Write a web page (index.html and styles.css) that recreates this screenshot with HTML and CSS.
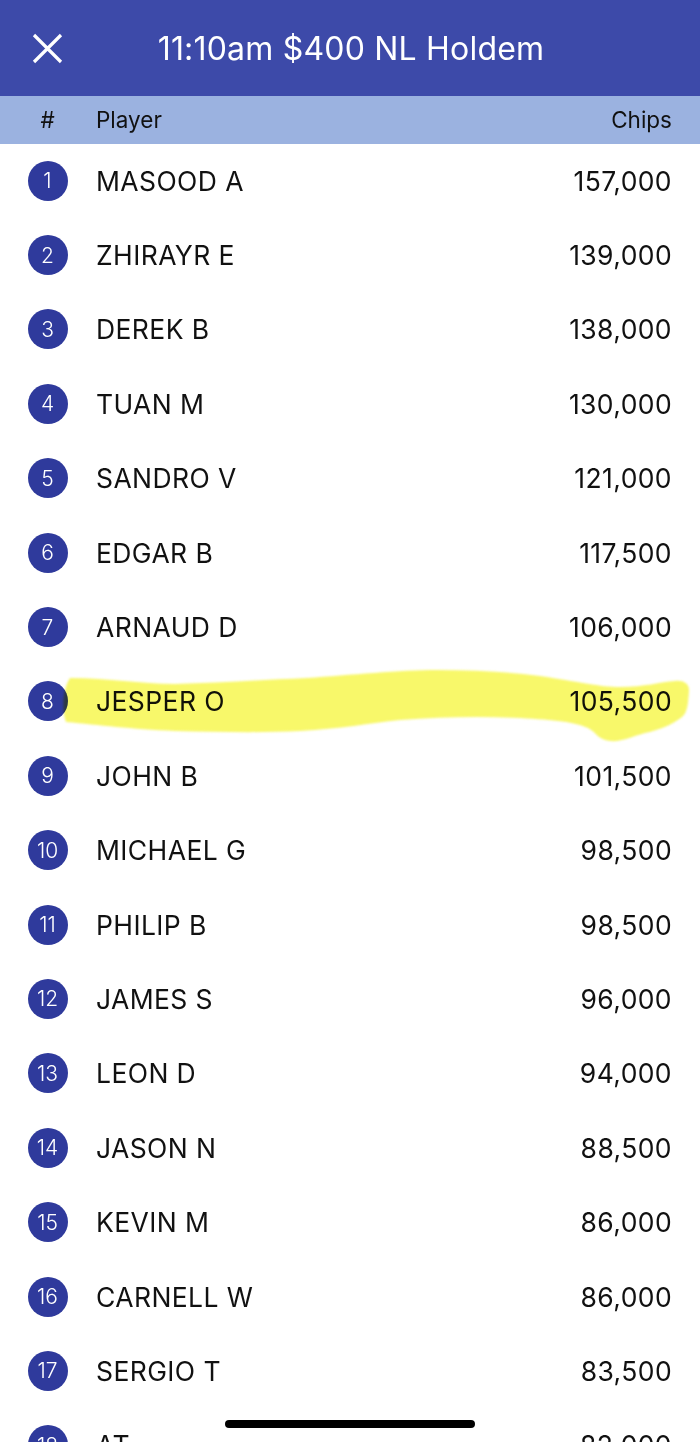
FILE: index.html
```html
<!DOCTYPE html>
<html lang="en">
<head>
    <meta charset="UTF-8">
    <meta name="viewport" content="width=device-width, initial-scale=1.0">
    <title>11:10am $400 NL Holdem</title>
    <link rel="stylesheet" href="styles.css">
</head>
<body>
    <div class="screen">
        <!-- Top bar -->
        <div class="topbar">
            <button class="btn-close" aria-label="Close">
                <svg width="31" height="31" viewBox="0 0 31 31">
                    <path d="M2 2 L29 29 M29 2 L2 29" stroke="#fff" stroke-width="3.2" stroke-linecap="butt" fill="none"/>
                </svg>
            </button>
            <div class="title">11:10am $400 NL Holdem</div>
            <div></div>
        </div>

        <!-- Column header -->
        <div class="colhead">
            <div class="col-rank">#</div>
            <div class="col-name">Player</div>
            <div class="col-chips">Chips</div>
        </div>

        <!-- Chip counts -->
        <div class="list">
            <div class="row"><div class="col-rank"><span class="badge">1</span></div><div class="col-name">MASOOD A</div><div class="col-chips">157,000</div></div>
            <div class="row"><div class="col-rank"><span class="badge">2</span></div><div class="col-name">ZHIRAYR E</div><div class="col-chips">139,000</div></div>
            <div class="row"><div class="col-rank"><span class="badge">3</span></div><div class="col-name">DEREK B</div><div class="col-chips">138,000</div></div>
            <div class="row"><div class="col-rank"><span class="badge">4</span></div><div class="col-name">TUAN M</div><div class="col-chips">130,000</div></div>
            <div class="row"><div class="col-rank"><span class="badge">5</span></div><div class="col-name">SANDRO V</div><div class="col-chips">121,000</div></div>
            <div class="row"><div class="col-rank"><span class="badge">6</span></div><div class="col-name">EDGAR B</div><div class="col-chips">117,500</div></div>
            <div class="row"><div class="col-rank"><span class="badge">7</span></div><div class="col-name">ARNAUD D</div><div class="col-chips">106,000</div></div>
            <div class="row row-marked">
                <div class="col-rank"><span class="badge">8</span></div><div class="col-name">JESPER O</div><div class="col-chips">105,500</div>
                <!-- highlighter stroke -->
                <svg class="marker" width="700" height="90" viewBox="0 660 700 90">
                    <path d="M70 678 C110 678 140 684 175 684 C215 683 260 680 307 678 C350 675 400 670 437 670 C475 670 510 672 540 676 C580 682 600 687 620 687 C645 687 660 682 675 681 C684 680 690 684 689 692 C688 702 688 712 682 717 C675 723 660 730 645 733 C630 737 622 742 610 741 C598 740 596 732 588 728 C575 722 555 720 520 718 C480 716 440 717 400 720 C370 723 340 729 300 731 C260 733 220 732 175 731 C130 729 100 725 66 722 C62 712 62 690 70 678 Z" fill="#f8f86a"/>
                </svg>
            </div>
            <div class="row"><div class="col-rank"><span class="badge">9</span></div><div class="col-name">JOHN B</div><div class="col-chips">101,500</div></div>
            <div class="row"><div class="col-rank"><span class="badge">10</span></div><div class="col-name">MICHAEL G</div><div class="col-chips">98,500</div></div>
            <div class="row"><div class="col-rank"><span class="badge">11</span></div><div class="col-name">PHILIP B</div><div class="col-chips">98,500</div></div>
            <div class="row"><div class="col-rank"><span class="badge">12</span></div><div class="col-name">JAMES S</div><div class="col-chips">96,000</div></div>
            <div class="row"><div class="col-rank"><span class="badge">13</span></div><div class="col-name">LEON D</div><div class="col-chips">94,000</div></div>
            <div class="row"><div class="col-rank"><span class="badge">14</span></div><div class="col-name">JASON N</div><div class="col-chips">88,500</div></div>
            <div class="row"><div class="col-rank"><span class="badge">15</span></div><div class="col-name">KEVIN M</div><div class="col-chips">86,000</div></div>
            <div class="row"><div class="col-rank"><span class="badge">16</span></div><div class="col-name">CARNELL W</div><div class="col-chips">86,000</div></div>
            <div class="row"><div class="col-rank"><span class="badge">17</span></div><div class="col-name">SERGIO T</div><div class="col-chips">83,500</div></div>
            <div class="row"><div class="col-rank"><span class="badge">18</span></div><div class="col-name">AT</div><div class="col-chips">82,000</div></div>
        </div>

        <div class="home-bar"></div>
    </div>
</body>
</html>
```

FILE: styles.css
```css
body {
    margin: 0;
    font-family: Inter, "Liberation Sans", Arial, sans-serif;
    color: #111;
    background: #fff;
}
.screen {
    position: relative;
    width: 700px;
    height: 1442px;
    overflow: hidden;
}
.topbar {
    height: 96px;
    background-color: #3d4aa9;
    display: grid;
    grid-template-columns: 95px 1fr 95px;
    align-items: center;
}
.btn-close {
    background: none;
    border: 0;
    padding: 0;
    margin: 1px 0 0 0;
    display: flex;
    justify-content: center;
    align-items: center;
    cursor: pointer;
}
.title {
    color: #fff;
    text-align: center;
    font-size: 32px;
    letter-spacing: 0.2px;
    padding-left: 2px;
}
.colhead {
    height: 47.5px;
    background-color: #9bb2e0;
    display: grid;
    grid-template-columns: 95px 1fr auto;
    align-items: center;
    padding-right: 28px;
    font-size: 22.5px;
}
.list {
    display: flex;
    flex-direction: column;
}
.row {
    position: relative;
    height: 74.4px;
    flex-shrink: 0;
    display: grid;
    grid-template-columns: 95px 1fr auto;
    align-items: center;
    padding-right: 28px;
    font-size: 26.5px;
    letter-spacing: 0.4px;
}
.col-rank {
    display: flex;
    justify-content: center;
}
.col-name {
    padding-left: 1px;
}
.col-chips {
    text-align: right;
}
.badge {
    width: 40px;
    height: 40px;
    border-radius: 50%;
    background-color: #2f3a9c;
    color: #fff;
    font-size: 21px;
    font-weight: 300;
    letter-spacing: 0;
    display: flex;
    justify-content: center;
    align-items: center;
}
.marker {
    position: absolute;
    left: 0;
    top: -4.3px;
    mix-blend-mode: multiply;
    filter: blur(0.8px);
    pointer-events: none;
}
.home-bar {
    position: absolute;
    left: 225px;
    top: 1420px;
    width: 250px;
    height: 8px;
    border-radius: 4px;
    background-color: #000;
}
```
